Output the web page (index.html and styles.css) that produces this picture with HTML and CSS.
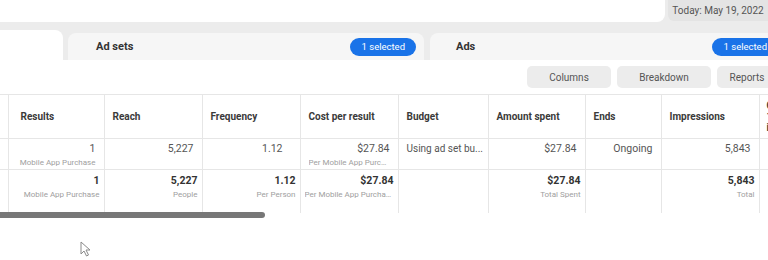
FILE: index.html
```html
<!DOCTYPE html>
<html>
<head>
<meta charset="utf-8">
<link rel="stylesheet" href="styles.css">
</head>
<body>
<div class="topbar">
  <div class="top-white"></div>
  <div class="today">Today: May 19, 2022</div>
</div>
<div class="tabs">
  <div class="tab-active"></div>
  <div class="tab-level tab-adsets"><span class="tab-label">Ad sets</span><span class="pill">1 selected</span></div>
  <div class="tab-level tab-ads"><span class="tab-label">Ads</span><span class="pill">1 selected</span></div>
</div>
<div class="toolbar">
  <div class="tbtn btn-columns">Columns</div>
  <div class="tbtn btn-breakdown">Breakdown</div>
  <div class="tbtn btn-reports">Reports</div>
</div>
<div class="table-wrap">
  <table class="grid">
    <colgroup>
      <col class="c0"><col class="c1"><col class="c2"><col class="c3"><col class="c4"><col class="c5"><col class="c6"><col class="c7"><col class="c8"><col class="c9">
    </colgroup>
    <thead>
      <tr>
        <th></th>
        <th class="first">Results</th>
        <th>Reach</th>
        <th>Frequency</th>
        <th>Cost per result</th>
        <th>Budget</th>
        <th>Amount spent</th>
        <th>Ends</th>
        <th>Impressions</th>
        <th class="last">CPM (cost per 1,000 impressions)</th>
      </tr>
    </thead>
    <tbody>
      <tr class="row-item">
        <td></td>
        <td class="num tight"><div class="v">1</div><div class="s">Mobile App Purchase</div></td>
        <td class="num"><div class="v">5,227</div></td>
        <td class="num wide"><div class="v">1.12</div></td>
        <td class="num"><div class="v">$27.84</div><div class="s">Per Mobile App Purchase</div></td>
        <td class="txt"><div class="v plain">Using ad set bu...</div></td>
        <td class="num"><div class="v">$27.84</div></td>
        <td class="num"><div class="v">Ongoing</div></td>
        <td class="num"><div class="v">5,843</div></td>
        <td></td>
      </tr>
      <tr class="row-total">
        <td></td>
        <td class="num"><div class="v">1</div><div class="s">Mobile App Purchase</div></td>
        <td class="num"><div class="v">5,227</div><div class="s">People</div></td>
        <td class="num"><div class="v">1.12</div><div class="s">Per Person</div></td>
        <td class="num"><div class="v">$27.84</div><div class="s">Per Mobile App Purchase</div></td>
        <td></td>
        <td class="num"><div class="v">$27.84</div><div class="s">Total Spent</div></td>
        <td></td>
        <td class="num"><div class="v">5,843</div><div class="s">Total</div></td>
        <td></td>
      </tr>
    </tbody>
  </table>
</div>
<div class="hscroll"><div class="thumb"></div></div>
<svg class="cursor" width="12" height="16" viewBox="0 0 12 16">
  <path d="M1 1 L1 13 L4 10 L6.5 15 L8.5 14 L6 9 L10 9 Z" fill="#fff" stroke="#8a8a8a" stroke-width="1" stroke-linejoin="round"/>
</svg>
</body>
</html>
```

FILE: styles.css
```css
html, body {
  margin: 0;
  padding: 0;
}
body {
  width: 768px;
  height: 260px;
  overflow: hidden;
  position: relative;
  background: #fff;
  font-family: Roboto, "Liberation Sans", Arial, sans-serif;
  color: #444;
}
.topbar {
  display: flex;
  height: 22px;
  background: #ececec;
}
.top-white {
  flex: 1;
  background: #fff;
  border-bottom-right-radius: 8px;
  margin-right: 3px;
}
.today {
  width: 100px;
  height: 21px;
  background: #e4e4e4;
  border-bottom-left-radius: 6px;
  font-size: 10px;
  color: #555;
  display: flex;
  align-items: center;
  justify-content: center;
}
.tabs {
  display: flex;
  align-items: flex-end;
  height: 30px;
  padding-top: 8px;
  background: #ececec;
}
.tab-active {
  width: 63px;
  height: 30px;
  background: #fff;
  border-top-right-radius: 8px;
  flex-shrink: 0;
}
.tab-level {
  width: 356px;
  height: 27px;
  flex-shrink: 0;
  box-sizing: border-box;
  background: #f6f6f6;
  border-radius: 8px 8px 0 0;
  display: flex;
  align-items: center;
  justify-content: space-between;
  padding: 0 8px 0 28px;
}
.tab-adsets {
  margin-left: 5px;
}
.tab-ads {
  margin-left: 6px;
  padding-left: 26px;
}
.tab-label {
  font-size: 11px;
  font-weight: 700;
  color: #333;
}
.pill {
  height: 18px;
  padding: 0 11px 0 12px;
  border-radius: 9px;
  background: #1a73e8;
  color: #fff;
  font-size: 9.5px;
  display: flex;
  align-items: center;
}
.toolbar {
  display: flex;
  justify-content: flex-end;
  gap: 6px;
  height: 34px;
  box-sizing: border-box;
  padding-top: 6px;
  margin-right: -9px;
}
.tbtn {
  height: 22px;
  border-radius: 5px;
  background: #ececec;
  color: #555;
  font-size: 10px;
  display: flex;
  align-items: center;
  justify-content: center;
}
.btn-columns { width: 84px; }
.btn-breakdown { width: 94px; }
.btn-reports { width: 60px; }
.table-wrap {
  width: 768px;
  overflow: hidden;
}
.grid {
  border-collapse: collapse;
  table-layout: fixed;
  width: 843px;
}
.c0 { width: 8px; }
.c1 { width: 96px; }
.c2 { width: 98px; }
.c3 { width: 98px; }
.c4 { width: 98px; }
.c5 { width: 90px; }
.c6 { width: 97px; }
.c7 { width: 76px; }
.c8 { width: 98px; }
.c9 { width: 84px; }
.grid th, .grid td {
  border: 1px solid #e6e6e6;
  border-left: none;
  overflow: hidden;
  white-space: nowrap;
}
.grid thead tr {
  height: 44px;
}
.grid th {
  text-align: left;
  font-size: 10px;
  font-weight: 700;
  color: #3a3a3a;
  padding: 0 8px;
  vertical-align: middle;
}
.grid th.first {
  padding-left: 12px;
}
.grid th.last {
  white-space: normal;
  line-height: 11px;
  padding-left: 7px;
}
.grid td {
  vertical-align: top;
}
.row-item {
  height: 31px;
}
.row-item td {
  padding: 3px 8px 0 8px;
}
.row-item td.tight {
  padding-left: 4px;
}
.row-item td.wide {
  padding-right: 17px;
}
.row-total {
  height: 43px;
}
.row-total td {
  padding: 4px 4px 0 4px;
  border-bottom: none;
}
.num {
  text-align: right;
}
.txt {
  text-align: left;
}
.v {
  font-size: 10.5px;
  line-height: 14px;
  color: #555;
  overflow: hidden;
  text-overflow: ellipsis;
}
.v.plain {
  font-size: 10px;
  overflow: visible;
}
.row-total .v {
  font-weight: 700;
  color: #333;
}
.s {
  font-size: 8px;
  line-height: 13px;
  color: #a0a0a0;
  overflow: hidden;
  text-overflow: ellipsis;
}
.hscroll {
  height: 6px;
  position: relative;
  margin-top: -1px;
}
.thumb {
  width: 265px;
  height: 6px;
  background: #777;
  border-radius: 0 3px 3px 0;
}
.cursor {
  position: absolute;
  left: 80px;
  top: 241px;
}
```
